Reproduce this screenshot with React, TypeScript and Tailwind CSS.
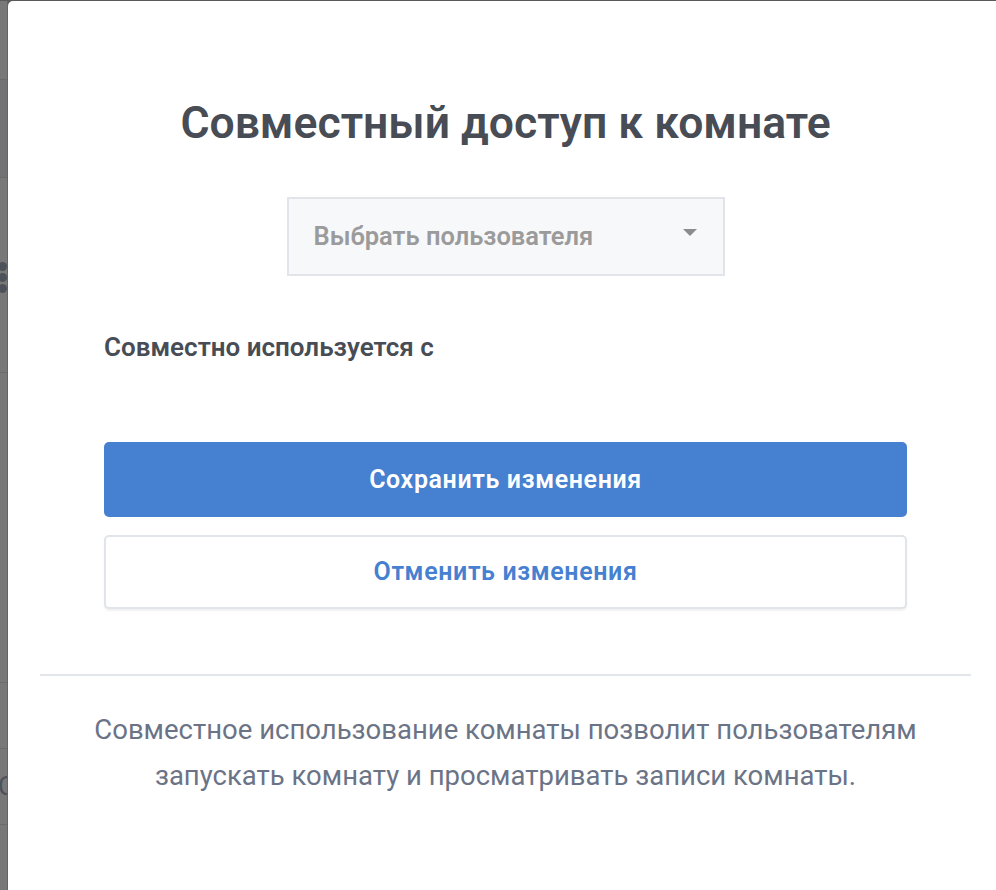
const font = { fontFamily: "Roboto, 'Noto Sans', sans-serif" };

// Background page peeking out behind the modal (left edge)
function BackgroundStrip() {
    return (
        <div className="w-[8px] shrink-0 flex flex-col bg-[#787878] border-r border-[#646464] overflow-hidden">
            <div className="h-[79px] border-b border-[#6a6a6c]" />
            <div className="h-[98px] border-b border-[#6a6a6c] bg-[#727275]" />
            <div className="h-[195px] border-b border-[#6a6a6c] flex flex-col items-start">
                <div className="h-[84px]" />
                <div className="flex flex-col gap-[2px] -ml-[2px]">
                    <span className="w-[9px] h-[9px] rounded-full bg-[#4d5159]" />
                    <span className="w-[9px] h-[9px] rounded-full bg-[#4d5159]" />
                    <span className="w-[9px] h-[9px] rounded-full bg-[#4d5159]" />
                </div>
            </div>
            <div className="h-[310px] border-b border-[#6a6a6c]" />
            <div className="h-[66px] border-b border-[#6a6a6c]" />
            <div className="h-[76px] border-b border-[#6a6a6c] flex flex-col">
                <div className="h-[24px]" />
                <span className="text-[#4d5159] text-[26px] leading-[26px] -ml-[2px]" style={font}>C</span>
            </div>
            <div className="flex-1" />
        </div>
    );
}

export default function App() {
    return (
        <div className="h-[890px] w-full overflow-hidden bg-[#5a5a5a] pt-px flex" style={font}>
            <BackgroundStrip />

            {/* Modal */}
            <div className="w-[995px] shrink-0 bg-white rounded-tl-[5px] px-8 pt-[96px]">
                <h1 className="text-center text-[44.5px] leading-[52px] font-semibold text-[#474c55]">
                    Совместный доступ к комнате
                </h1>

                <div className="px-16">
                    <div className="mx-auto mt-[48px] w-[438px] h-[79px] bg-[#f7f8fa] border-2 border-[#e1e5ea] flex items-center justify-between pl-[25px] pr-[26px]">
                        <span className="text-[25.5px] font-semibold text-[#9b9b9b]">Выбрать пользователя</span>
                        <svg width="14" height="7" viewBox="0 0 14 7" className="mb-[8px]">
                            <path d="M0 0 H14 L7 7 Z" fill="#8c8c8c" />
                        </svg>
                    </div>

                    <div className="mt-[56px] text-[26px] leading-[30px] font-semibold text-[#474c55]">
                        Совместно используется с
                    </div>

                    <div className="mt-[80px] flex flex-col gap-[18px]">
                        <button className="h-[75px] w-full rounded-[5px] bg-[#4680d0] text-white text-[25px] font-semibold tracking-wide">
                            Сохранить изменения
                        </button>
                        <button className="h-[74px] w-full rounded-[5px] bg-white border-2 border-[#e1e5ea] shadow-[0_2px_2px_rgba(0,0,0,0.06)] text-[#4680d0] text-[25px] font-semibold tracking-wide">
                            Отменить изменения
                        </button>
                    </div>
                </div>

                <div className="mt-[65px] h-[2px] bg-[#e3e6ea]" />

                <p className="mt-[31px] text-center text-[27.5px] leading-[46px] text-[#6b7386]">
                    Совместное использование комнаты позволит пользователям
                    <br />
                    запускать комнату и просматривать записи комнаты.
                </p>
            </div>
        </div>
    );
}
